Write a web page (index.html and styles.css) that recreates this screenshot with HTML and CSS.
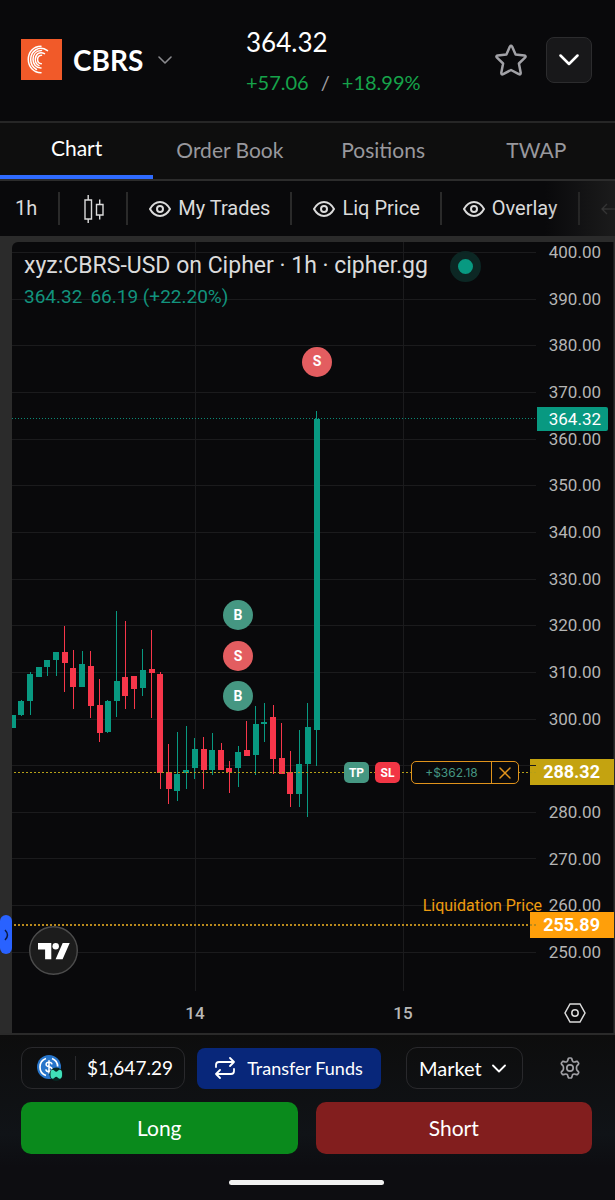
FILE: index.html
```html
<!DOCTYPE html>
<html lang="en">
<head>
<meta charset="utf-8">
<meta name="viewport" content="width=device-width, initial-scale=1">
<title>CBRS</title>
<link rel="stylesheet" href="styles.css">
</head>
<body>
<header class="header">
  <button class="symbol" type="button">
    <svg class="symbol-logo" viewBox="0 0 41 41" aria-hidden="true">
      <rect width="41" height="41" fill="#f15a29"/>
      <g fill="none" stroke="#fff" stroke-width="1.500" stroke-linecap="round">
        <path d="M20 7.300C12 7.300 7.300 13.500 7.300 20.500S12.500 33.700 20 33.700"/>
        <path d="M26.500 11.600C18 6 9.700 12 9.700 20.500c0 4.500 2.300 8 5.800 10"/>
        <path d="M20.500 11.600C15 11.600 12 15.500 12 20.500c0 4.500 3.200 8.600 8 8.600"/>
        <path d="M23.500 14.600C18.500 12 14.300 15.500 14.300 20.500c0 3 1.500 5 3.700 6.200"/>
        <path d="M20.500 16.300C18 16.500 16.600 18.300 16.600 20.500c0 2.300 1.500 4 3.700 4.200"/>
      </g>
    </svg>
    <span class="symbol-name">CBRS</span>
    <svg class="symbol-chevron" viewBox="0 0 14 8" aria-hidden="true"><path d="M1 1l6 6 6-6" fill="none" stroke="#8a8a8e" stroke-width="1.600" stroke-linecap="round" stroke-linejoin="round"/></svg>
  </button>
  <div class="quote">
    <div class="quote-price">364.32</div>
    <div class="quote-change"><span>+57.06</span><span class="slash">/</span><span>+18.99%</span></div>
  </div>
  <button class="favorite" type="button" aria-label="Favorite">
    <svg viewBox="0 0 32 32" width="32" height="32" aria-hidden="true"><path d="M14.900 2.600Q16 .8 17.100 2.600L20.600 10.400 29.300 11.500Q31.500 12 30 13.700L23.900 19.500 25.700 28.700Q25.800 31 23.800 30.200L16 26 8.200 30.200Q6.200 31 6.300 28.700L8.100 19.500 2 13.700Q.5 12 2.700 11.500L11.400 10.400z" fill="none" stroke="#a1a1a6" stroke-width="2.500" stroke-linejoin="round"/></svg>
  </button>
  <button class="collapse" type="button" aria-label="Collapse">
    <svg viewBox="0 0 20 12" width="20" height="12" aria-hidden="true"><path d="M1.500 1.500L10 10l8.500-8.500" fill="none" stroke="#fff" stroke-width="2.500" stroke-linecap="round" stroke-linejoin="round"/></svg>
  </button>
</header>

<nav class="tabs">
  <button class="tab tab-active" type="button">Chart</button>
  <button class="tab" type="button">Order Book</button>
  <button class="tab" type="button">Positions</button>
  <button class="tab" type="button">TWAP</button>
</nav>

<div class="toolbar">
  <button class="tool tool-interval" type="button">1h</button>
  <button class="tool tool-style" type="button" aria-label="Chart type">
    <svg viewBox="0 0 20 28" width="20" height="28" aria-hidden="true" fill="none" stroke="#dbdbdb" stroke-width="1.400"><path d="M1 5h6.500v19H1zM4.200 0v5M4.200 24v4M12.500 9.500H19V20h-6.500zM15.700 4.500v5M15.700 20v4.500"/></svg>
  </button>
  <button class="tool" type="button">
    <svg class="eye" viewBox="0 0 22 16" aria-hidden="true"><path d="M1 8C3.500 3.500 7 1 11 1s7.500 2.500 10 7c-2.500 4.500-6 7-10 7S3.500 12.500 1 8z"/><circle cx="11" cy="8" r="3"/></svg>
    My Trades
  </button>
  <button class="tool" type="button">
    <svg class="eye" viewBox="0 0 22 16" aria-hidden="true"><path d="M1 8C3.500 3.500 7 1 11 1s7.500 2.500 10 7c-2.500 4.500-6 7-10 7S3.500 12.500 1 8z"/><circle cx="11" cy="8" r="3"/></svg>
    Liq Price
  </button>
  <button class="tool" type="button">
    <svg class="eye" viewBox="0 0 22 16" aria-hidden="true"><path d="M1 8C3.500 3.500 7 1 11 1s7.500 2.500 10 7c-2.500 4.500-6 7-10 7S3.500 12.500 1 8z"/><circle cx="11" cy="8" r="3"/></svg>
    Overlay
  </button>
  <button class="tool tool-undo" type="button" aria-label="Undo">
    <svg viewBox="0 0 22 12" width="22" height="12" aria-hidden="true"><path d="M6 1L1 6l5 5M1 6h20" fill="none" stroke="#606060" stroke-width="1.300"/></svg>
  </button>
</div>

<main class="chart-frame">
  <div class="drawer"><button class="drawer-handle" type="button" aria-label="Open drawing tools"><svg viewBox="0 0 5 12" width="5" height="12" aria-hidden="true"><path d="M1 1q5 5 0 10" fill="none" stroke="#0a1a44" stroke-width="1.500"/></svg></button></div>
  <section class="chart">
    <div class="plot">
      <svg class="plot-canvas" aria-label="CBRS hourly candles">
        <path class="grid-line" d="M183.500 0v749M391.500 0v749"/>
        <path class="grid-line" d="M0 10.500h9999M0 57.500h9999M0 103.500h9999M0 150.500h9999M0 197.500h9999M0 243.500h9999M0 290.500h9999M0 337.500h9999M0 383.500h9999M0 430.500h9999M0 477.500h9999M0 523.500h9999M0 570.500h9999M0 616.500h9999M0 663.500h9999M0 710.500h9999"/>
        <g transform="translate(-12 -242)">
          <path class="wick up" d="M21.500 700V716M30.500 672V715M47.500 660V676M56.500 652V676M82.500 651V687M107.500 700V733M116.500 611V717M142.500 649V696M177.500 732V801M186.500 726V789M194.500 738V779M212.500 733V775M238.500 746V787M255.500 706V775M264.500 703V742M299.500 730V807M307.500 703V817M316.500 411V766"/>
          <path class="wick down" d="M64.500 626V692M73.500 650V709M90.500 651V718M99.500 679V742M125.500 621V709M134.500 676V709M151.500 630V718M160.500 672V789M168.500 744V804M203.500 737V789M221.500 743V770M229.500 761V793M246.500 721V756M273.500 705V774M281.500 723V774M290.500 751V807"/>
          <path class="body up" d="M13 715V728M21 701V715M30 674V701M39 667V677M47 660V667M56 652V660M82 664V687M108 701V732M117 681V701M143 670V688M177 774V791M186 770V773M195 749V768M212 750V770M238 752V768M256 724V755M264 722V724M299 764V794M308 727V764M317 419V730"/>
          <path class="body down" d="M65 652V663M73 668V687M91 666V706M100 705V733M125 677V696M134 676V689M152 669V673M160 674V773M169 772V789M204 749V770M221 750V770M229 768V772M247 750V756M273 717V759M282 758V774M290 772V794"/>
        </g>
        <path class="line-last" d="M0 176.500h9999"/>
        <path class="line-entry" d="M2 530.500h9999"/>
        <path class="line-liq" d="M2 683h9999"/>
        <g class="marks">
          <circle class="mark-sell" cx="305" cy="120" r="15"/><text x="305" y="124">S</text>
          <circle class="mark-buy" cx="226" cy="373" r="15"/><text x="226" y="378">B</text>
          <circle class="mark-sell" cx="226" cy="414" r="15"/><text x="226" y="419">S</text>
          <circle class="mark-buy" cx="226" cy="454" r="15"/><text x="226" y="459">B</text>
        </g>
        <g class="times"><text x="183" y="777">14</text><text x="391" y="777">15</text></g>
      </svg>
      <div class="legend">
        <div class="legend-title">xyz:CBRS-USD on Cipher · 1h · cipher.gg <span class="live-dot"></span></div>
        <div class="legend-values"><span>364.32</span><span>66.19 (+22.20%)</span></div>
      </div>
      <div class="position">
        <button class="chip chip-tp" type="button">TP</button>
        <button class="chip chip-sl" type="button">SL</button>
        <div class="pnl">
          <span class="pnl-value">+$362.18</span>
          <button class="pnl-close" type="button" aria-label="Close position"><svg viewBox="0 0 12 12" width="12" height="12" aria-hidden="true"><path d="M1 1l10 10M11 1L1 11" stroke="#e0931c" stroke-width="1.500" stroke-linecap="round"/></svg></button>
        </div>
      </div>
      <div class="liq-label">Liquidation Price</div>
      <a class="tv-logo" href="#" aria-label="TradingView"><svg viewBox="0 0 49 49" width="49" height="49" aria-hidden="true"><circle cx="24.500" cy="24.500" r="23.800" fill="#1c1c1c" stroke="#4c4c4c" stroke-width="1.400"/><path d="M9 17h13.300v16.300h-6.200V23.500H9zM33.700 17h7l-7.100 16.300h-7z" fill="#fff"/><circle cx="26.700" cy="20.200" r="3.200" fill="#fff"/></svg></a>
    </div>
    <div class="axis">
      <div class="axis-prices">
        <span>400.00</span><span>390.00</span><span>380.00</span><span>370.00</span><span>360.00</span><span>350.00</span><span>340.00</span><span>330.00</span><span>320.00</span><span>310.00</span><span>300.00</span><span></span><span>280.00</span><span>270.00</span><span>260.00</span><span>250.00</span>
      </div>
      <div class="price-tag tag-last">364.32</div>
      <div class="price-tag tag-entry">288.32</div>
      <div class="price-tag tag-liq">255.89</div>
      <button class="axis-settings" type="button" aria-label="Chart settings"><svg viewBox="0 0 22 20" width="22" height="20" aria-hidden="true" fill="none" stroke="#dbdbdb" stroke-width="1.500"><path d="M6 1h10l5 9-5 9H6l-5-9z"/><circle cx="11" cy="10" r="3.200"/></svg></button>
    </div>
  </section>
</main>

<footer class="trade-bar">
  <div class="trade-row">
    <div class="balance">
      <svg class="coin" viewBox="0 0 26 26" aria-hidden="true">
        <circle cx="12" cy="12" r="12" fill="#2775ca"/>
        <path d="M9 3.500a9 9 0 0 0 0 17M15 3.500a9 9 0 0 1 5.700 8" fill="none" stroke="#fff" stroke-width="1.700"/>
        <path d="M15 9.300c-.3-1.500-1.500-2.100-3-2.100-1.700 0-2.900.8-2.900 2.200 0 3.200 6 1.500 6 4.900 0 1.500-1.300 2.400-3.100 2.400-1.800 0-3-.9-3.200-2.300M12 5.300v13.200" fill="none" stroke="#fff" stroke-width="1.500"/>
        <circle cx="19.200" cy="19.200" r="6.800" fill="#072723"/>
        <path d="M13.500 18c0-3 2.300-4.300 4-2.200 1.300 1.300 2.100 1.300 3.400 0 1.900-2 4.100-.8 4.100 2.200v2.500c0 3-2.200 4.300-4.100 2.200-1.300-1.300-2.100-1.300-3.400 0-1.700 2-4 .8-4-2.200z" fill="#40e0b8"/>
      </svg>
      <span class="balance-value">$1,647.29</span>
    </div>
    <button class="transfer" type="button">
      <svg viewBox="0 0 20 22" width="20" height="22" aria-hidden="true"><path d="M15 1l4 4-4 4M1 10V8q0-3 3-3h15M5 21l-4-4 4-4M19 12v2q0 3-3 3H1" fill="none" stroke="#fff" stroke-width="1.800" stroke-linecap="round" stroke-linejoin="round"/></svg>
      Transfer Funds
    </button>
    <div class="order-type">
      <select aria-label="Order type"><option>Market</option></select>
      <svg viewBox="0 0 14 9" width="14" height="9" aria-hidden="true"><path d="M1 1.500l6 6 6-6" fill="none" stroke="#fff" stroke-width="1.800" stroke-linecap="round" stroke-linejoin="round"/></svg>
    </div>
    <button class="settings" type="button" aria-label="Settings"><svg viewBox="0 0 24 24" width="24" height="24" aria-hidden="true" fill="none" stroke="#a1a1a6" stroke-width="1.700" stroke-linejoin="round"><path d="M9.800 4.300 10.300 2.500Q10.600 2 11.200 2h1.600q.6 0 .9.500l.5 1.800q.2.900 1 1.400.9.500 1.800.2l1.800-.5q.7-.2 1 .4l.8 1.400q.3.600-.2 1.100L19.100 9.700q-.6.600-.6 2.300 0 1.700.6 2.300l1.300 1.400q.5.500.2 1.100l-.8 1.400q-.3.600-1 .4L17 18.100q-.9-.3-1.800.2-.8.500-1 1.400l-.5 1.800q-.3.500-.9.500h-1.600q-.6 0-.9-.5l-.5-1.800q-.2-.9-1-1.400-.9-.5-1.800-.2l-1.800.5q-.7.200-1-.4l-.8-1.400q-.3-.6.200-1.100l1.300-1.400q.6-.6.6-2.300 0-1.700-.6-2.300L3.600 8.300q-.5-.5-.2-1.100l.8-1.400q.3-.6 1-.4L7 5.900q.9.300 1.800-.2.800-.5 1-1.400z"/><circle cx="12" cy="12" r="3.200"/></svg></button>
  </div>
  <div class="trade-actions">
    <button class="side side-long" type="button">Long</button>
    <button class="side side-short" type="button">Short</button>
  </div>
  <div class="home-indicator"></div>
</footer>
</body>
</html>
```

FILE: styles.css
```css
* { box-sizing: border-box; }

body {
  margin: 0;
  background: #09090b;
  color: #fff;
  font-family: Lato, "Noto Sans", sans-serif;
}

button, select {
  margin: 0;
  padding: 0;
  border: 0;
  background: none;
  color: inherit;
  font: inherit;
  cursor: pointer;
}

svg { display: block; flex: none; }

/* Header */
.header {
  display: flex;
  align-items: center;
  height: 121px;
  padding: 0 23px 2px 21px;
}
.symbol {
  display: flex;
  align-items: center;
  gap: 11px;
  width: 225px;
}
.symbol-logo { width: 41px; height: 41px; }
.symbol-name { font-size: 28px; line-height: 32px; font-weight: 700; }
.symbol-chevron { width: 14px; height: 8px; margin-left: 4px; }
.quote { flex: 1; padding-top: 4px; }
.quote-price { font-size: 26px; line-height: 40px; }
.quote-change {
  display: flex;
  gap: 12px;
  font-size: 20px;
  line-height: 40px;
  color: #16a34a;
}
.slash { color: #a1a1a6; }
.favorite { margin-right: 19px; }
.collapse {
  display: grid;
  place-items: center;
  width: 46px;
  height: 46px;
  border: 1px solid #2c2c2e;
  border-radius: 8px;
  background: #18181a;
}

/* Tabs */
.tabs {
  display: grid;
  grid-template-columns: repeat(4, 1fr);
  height: 60px;
  padding-right: 2px;
  border-top: 2px solid #262626;
  border-bottom: 2px solid #2c2c2c;
  background: #0e0e0e;
}
.tab { padding-bottom: 2px; color: #98989d; font-size: 21px; line-height: 24px; }
.tab-active { color: #fff; border-bottom: 4px solid #2f6bff; }

/* Toolbar */
.toolbar {
  position: relative;
  display: flex;
  align-items: center;
  height: 55px;
  overflow: hidden;
  font-family: Roboto, sans-serif;
  font-size: 20px;
  line-height: 33px;
  color: #dbdbdb;
}
.toolbar::after {
  content: "";
  position: absolute;
  inset: 0 0 0 auto;
  width: 70px;
  background: linear-gradient(90deg, transparent, rgba(32, 32, 32, 0.8));
  pointer-events: none;
}
.tool {
  display: flex;
  flex: none;
  align-items: center;
  gap: 7px;
  height: 33px;
  padding: 0 20px 0 21px;
  border-right: 2px solid #2a2a2a;
}
.tool-interval { padding: 0 21px 0 15px; }
.tool-style { padding: 0 22px 0 24px; }
.tool-undo { padding: 0 21px; border: 0; }
.eye {
  width: 22px;
  height: 16px;
  fill: none;
  stroke: #dbdbdb;
  stroke-width: 2px;
}

/* Chart */
.chart-frame {
  display: flex;
  padding-top: 6px;
  background: #2b2b2b;
}
.drawer {
  flex: none;
  display: flex;
  align-items: flex-end;
  width: 12px;
  padding-bottom: 79px;
}
.drawer-handle {
  display: grid;
  place-items: center;
  width: 12px;
  height: 39px;
  border-radius: 6px;
  background: #2962ff;
}
.chart {
  flex: 1;
  min-width: 0;
  display: grid;
  grid-template-columns: 1fr 78px;
  margin-right: 1px;
  border-top-left-radius: 6px;
  background: #09090b;
  font-family: Roboto, sans-serif;
}
.plot { position: relative; z-index: 1; min-width: 0; }
.plot-canvas { width: 100%; height: 791px; }
.grid-line { stroke: #1b1b1d; fill: none; }
.wick { stroke-width: 1px; fill: none; }
.body { stroke-width: 6px; fill: none; }
.up { stroke: #089981; }
.down { stroke: #f7364a; }
.line-last { stroke: #0b8a76; stroke-dasharray: 1 2; }
.line-entry { stroke: #b5a018; stroke-dasharray: 2 2; stroke-width: 1px; }
.line-liq { stroke: #b98a1c; stroke-dasharray: 2 2; stroke-width: 2px; }
.mark-buy { fill: #459782; }
.mark-sell { fill: #e35d60; }
.marks text { fill: #fff; font-size: 14px; font-weight: 700; text-anchor: middle; }
.times text { fill: #b8b8b8; font-size: 17px; font-weight: 500; text-anchor: middle; }

.legend { position: absolute; top: 7px; left: 12px; }
.legend-title {
  display: flex;
  align-items: center;
  font-size: 23px;
  line-height: 34px;
  color: #dbdbdb;
  white-space: nowrap;
}
.live-dot {
  width: 31px;
  height: 31px;
  margin-left: 22px;
  border: 8px solid #0c2724;
  border-radius: 50%;
  background: #089981;
}
.legend-values {
  display: flex;
  gap: 8px;
  font-size: 19px;
  line-height: 28px;
  color: #12937d;
}

.position {
  position: absolute;
  top: 519px;
  right: 17px;
  display: flex;
  align-items: center;
  gap: 6px;
}
.chip {
  width: 25px;
  height: 21px;
  border-radius: 5px;
  font-size: 12px;
  line-height: 20px;
  font-weight: 700;
}
.chip-tp { background: #459782; }
.chip-sl { background: #f23645; }
.pnl {
  display: flex;
  align-items: center;
  height: 23px;
  margin-left: 5px;
  border: 1px solid #e0931c;
  border-radius: 5px;
  background: #09090b;
  overflow: hidden;
}
.pnl-value {
  width: 79px;
  font-family: Inter, sans-serif;
  font-size: 12px;
  line-height: 21px;
  text-align: center;
  color: #459782;
}
.pnl-close {
  display: grid;
  place-items: center;
  width: 27px;
  height: 23px;
  border-left: 1px solid #e0931c;
}
.liq-label {
  position: absolute;
  top: 654px;
  right: -6px;
  font-size: 16px;
  line-height: 20px;
  color: #ee9c10;
}
.tv-logo { position: absolute; left: 17px; bottom: 58px; }

.axis { position: relative; border-right: 1px solid #1c1c1e; }
.axis-prices {
  display: flex;
  flex-direction: column;
  justify-content: space-between;
  height: 720px;
  padding-right: 12px;
  font-size: 17px;
  line-height: 20px;
  text-align: right;
  color: #b5b5b5;
}
.axis-prices span { height: 20px; }
.price-tag {
  position: absolute;
  left: -6px;
  right: -1px;
  padding-right: 14px;
  font-size: 18px;
  line-height: 26px;
  font-weight: 700;
  text-align: right;
}
.tag-last {
  top: 165px;
  left: 1px;
  right: 5px;
  padding-right: 7px;
  border-radius: 0 2px 2px 0;
  font-size: 17px;
  line-height: 24px;
  font-weight: 400;
  background: #089981;
}
.tag-entry { top: 517px; background: #c4a310; }
.tag-liq { top: 670px; background: #ff9f0a; }
.axis-settings { display: block; margin: 41px 0 0 28px; }

/* Trade bar */
.trade-bar {
  height: 167px;
  padding: 12px 23px 0 21px;
  border-top: 2px solid #2a2a2a;
  background: linear-gradient(#0d0d0d, #101317 60%, #0d0d11 80%);
}
.trade-row { display: flex; align-items: center; height: 42px; }
.balance {
  display: flex;
  align-items: center;
  width: 164px;
  height: 42px;
  padding-left: 15px;
  border: 1px solid #29292c;
  border-radius: 11px;
}
.coin { width: 26px; height: 26px; margin-right: 12px; }
.balance-value {
  padding-left: 11px;
  border-left: 1px solid #29292c;
  font-size: 19px;
  line-height: 24px;
}
.transfer {
  display: flex;
  align-items: center;
  justify-content: center;
  gap: 12px;
  width: 184px;
  height: 41px;
  margin: 0 25px 0 12px;
  border-radius: 8px;
  background: #08277a;
  font-size: 18px;
}
.order-type { position: relative; width: 117px; height: 42px; }
.order-type select {
  width: 100%;
  height: 100%;
  padding: 0 12px;
  border: 1px solid #29292c;
  border-radius: 11px;
  appearance: none;
  font-size: 20px;
}
.order-type svg { position: absolute; right: 17px; top: 17px; pointer-events: none; }
.settings { margin-left: auto; margin-right: 10px; }
.trade-actions {
  display: grid;
  grid-template-columns: 1fr 1fr;
  gap: 18px;
  margin-top: 13px;
}
.side { height: 52px; padding-bottom: 2px; border-radius: 10px; font-size: 21px; }
.side-long { background: #0a8a1c; }
.side-short { background: #821e1e; }
.home-indicator {
  width: 155px;
  height: 5px;
  margin: 26px auto 0;
  border-radius: 3px;
  background: #f1f1f1;
}
```
